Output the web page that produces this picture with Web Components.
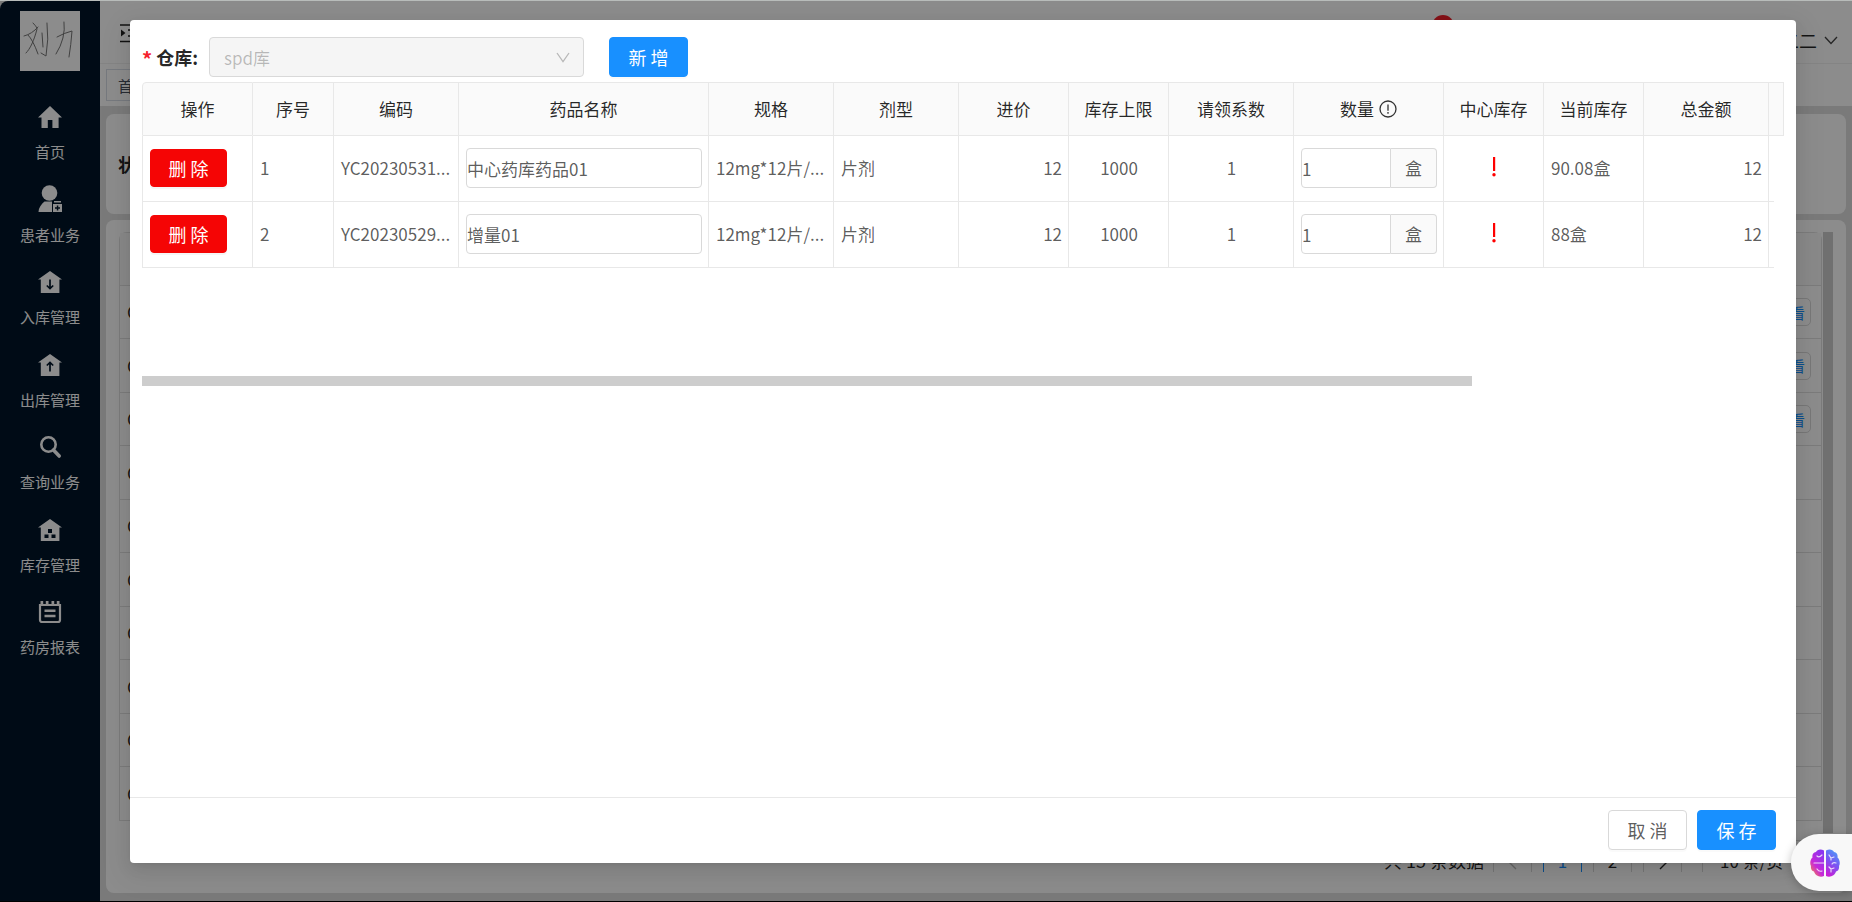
<!DOCTYPE html>
<html lang="zh-CN">
<head>
<meta charset="utf-8">
<title>药房请领</title>
<style>
html,body{margin:0;height:100%}
body{font-family:"Noto Sans CJK SC","Noto Sans",sans-serif;font-size:17px;color:rgba(0,0,0,.65);background:#dedede}
</style>
</head>
<body>
<app-shell></app-shell>
<script>
const define = (name, html, setup) => customElements.define(name, class extends HTMLElement {
  connectedCallback() {
    if (this.shadowRoot) return;
    const root = this.attachShadow({ mode: 'open' });
    const tpl = document.createElement('template');
    tpl.innerHTML = '<style>*{box-sizing:border-box}:host{box-sizing:border-box}</style>' + (typeof html === 'function' ? html(this) : html);
    root.append(tpl.content.cloneNode(true));
    if (setup) setup(this, root);
  }
});

const house = 'M12 1 0 9.5h2.8V23h18.6V9.5H24Z';
const icons = {
  home: '<path d="M12 1 0 12.5h3.5V23h6.3v-8h4.6v8h6.2V12.5H24Z"/>',
  patient: '<g transform="translate(0 -3)"><circle cx="11.5" cy="8" r="7.8"/><path d="M6.5 16.5h7.5V27H.5c0-4 2.500-7.500 6-10.500Z"/><path d="M16 16h7v1.500h-7zM15 19h9v8h-9zM18.800 20.500v1.700H17v1.500h1.800v1.800h1.500v-1.800H22v-1.500h-1.700v-1.700Z" fill-rule="evenodd"/></g>',
  inbound: `<path d="${house}"/><path d="M12 9.500v9M8.800 15.500l3.200 3 3.200-3" stroke="#001529" stroke-width="1.700" fill="none"/>`,
  outbound: `<path d="${house}"/><path d="M12 18.500v-9M8.800 12.500l3.200-3 3.200 3" stroke="#001529" stroke-width="1.700" fill="none"/>`,
  search: '<circle cx="10.500" cy="9.500" r="7.200" fill="none" stroke="#fff" stroke-width="2.600"/><path d="m15.500 15 5.700 6" stroke="#fff" stroke-width="3.600" stroke-linecap="round"/>',
  stock: `<path d="${house}"/><path d="M10 11h4v4h-4zM6.500 16.500h4v3.500h-4zM13.500 16.500h4v3.500h-4z" fill="#001529"/>`,
  report: '<path d="M2 5h20v15a2 2 0 0 1-2 2H4a2 2 0 0 1-2-2Z" fill="none" stroke="#fff" stroke-width="2.200"/><path d="M2.500 1h2.700v5H2.500zM7.800 1h2.700v5H7.800zM13.500 1h2.700v5h-2.700zM18.800 1h2.700v5h-2.700zM6.500 9.500h11v2.400h-11zM6.500 14.800h11v2.400h-11z"/>'
};

define('nav-item', el => `<style>
:host{display:block;padding-top:12px}
a{display:flex;flex-direction:column;align-items:center;gap:12px;color:#fff;text-decoration:none;font-size:15px;line-height:22px}
svg{width:24px;height:24px;overflow:visible;fill:#fff}
</style><a href="#${el.getAttribute('icon')}"><svg viewBox="0 0 24 24">${icons[el.getAttribute('icon')]}</svg><slot></slot></a>`);

define('side-nav', `<style>
:host{display:block;width:100px;flex:none;background:#001529;border-top-left-radius:8px;padding-top:10px}
.logo{display:block;width:60px;height:60px;margin:0 auto 22px;background:#fff}
nav{display:grid;grid-auto-rows:1fr;min-height:578px}
</style>
<svg class="logo" viewBox="0 0 60 60" fill="none" stroke="#777" stroke-width="1" stroke-linecap="round"><path d="M13 12q3 3 4 5M4 25q8-2 14-9M17 18C14 30 10 38 6 42M8 24q5 5 10 19M22 22l1 14M27 12q2 16-1 33l-5-3M37 26q7-4 15-6-1 14-3 26M44 11q2 16-8 32"/></svg>
<nav>
<nav-item icon="home">首页</nav-item><nav-item icon="patient">患者业务</nav-item><nav-item icon="inbound">入库管理</nav-item><nav-item icon="outbound">出库管理</nav-item><nav-item icon="search">查询业务</nav-item><nav-item icon="stock">库存管理</nav-item><nav-item icon="report">药房报表</nav-item>
</nav>`);

define('top-bar', `<style>
:host{display:block;background:#fff}
header{height:63px;display:flex;align-items:center;padding:0 14px 0 20px;border-bottom:1px solid #f0f0f0}
.fold{width:20px;height:20px;margin-top:2px}
.bell{position:relative;margin-left:auto;width:24px;height:24px;margin-right:332px}
.bell i{position:absolute;left:7px;top:-5px;width:22px;height:22px;border-radius:50%;background:#f5222d}
.user{display:flex;align-items:center;gap:7px;color:rgba(0,0,0,.85);padding-top:16px;font-size:18px}
.tabs{height:42px;padding:5px 6px}
.tabs a{display:inline-block;height:32px;padding:0 11px;border:1px solid #d8dce5;font-size:15px;line-height:32px;color:#495060;text-decoration:none}
</style>
<header><svg class="fold" viewBox="0 0 20 20" stroke="#222" stroke-width="1.600" fill="#222"><path d="M0 2h20M8 7h12M8 13h12M0 18.500h20"/><path d="m1 6.500 4.500 3.500L1 13.500Z" stroke="none"/></svg>
<span class="bell"><i></i></span>
<span class="user">二二<svg width="14" height="9" viewBox="0 0 14 9" fill="none" stroke="#444" stroke-width="1.300"><path d="m1 1 6 6.500L13 1"/></svg></span></header>
<div class="tabs"><a href="#home">首页</a></div>`);

define('record-list', `<style>
:host{display:flex;gap:1px;height:601px;padding:0 13px}
table{flex:1;width:100%;border-collapse:separate;border-spacing:0;border:1px solid #e0e0e0;border-bottom:0;border-radius:8px 8px 0 0;height:589px}
th{height:53px;background:#fafafa;border-bottom:1px solid #e0e0e0}
td{height:53px;padding:0 7px;border-bottom:1px solid #e0e0e0;line-height:24px;color:rgba(0,0,0,.85)}
tr:nth-child(even) td{height:54px}
td:last-child{text-align:right;padding-right:10px}
.bar{width:10px;background:#ccc}
button{height:28px;padding:0 5px;border:1px solid #d9d9d9;border-radius:5px;background:#fff;color:#1890ff;font:15px "Noto Sans CJK SC",sans-serif;vertical-align:middle}
</style><table><thead><tr><th></th><th></th></tr></thead><tbody></tbody></table><div class="bar"></div>`, (el, root) => {
  root.querySelector('tbody').innerHTML = Array.from({ length: 10 }, (_, i) => `<tr><td>C</td><td>${i < 3 ? '<button>查看</button>' : ''}</td></tr>`).join('');
});

define('page-pager', `<style>
:host{display:flex;justify-content:flex-end;gap:11px;height:32px;overflow:hidden;padding-right:26px;line-height:40px;margin-top:7px;color:rgba(0,0,0,.85)}
button,select{width:39px;height:40px;flex:none;border:1px solid #d9d9d9;border-radius:3px;background:#fff;font:17px "Noto Sans CJK SC",sans-serif;color:inherit;padding:0}
.on{border-color:#1890ff;color:#1890ff}
.off{color:#bbb}
select{appearance:none;width:118px;margin-left:9px;padding:0 17px}
span{margin-right:-2px;font-size:18px}
svg{vertical-align:middle}
</style><span>共 15 条数据</span>
<button class="off" aria-label="上一页"><svg width="8" height="14" viewBox="0 0 8 14" fill="none" stroke="currentColor" stroke-width="1.400"><path d="M7 1 1 7l6 6"/></svg></button><button class="on">1</button><button>2</button><button aria-label="下一页"><svg width="8" height="14" viewBox="0 0 8 14" fill="none" stroke="currentColor" stroke-width="1.400"><path d="m1 1 6 6-6 6"/></svg></button><select aria-label="每页条数"><option>10 条/页</option></select>`);

define('base-page', `<style>
:host{display:flex;min-height:100%}
main{flex:1;min-width:0;display:flex;flex-direction:column}
section{margin:0 6px 6px;background:#fff;border-radius:8px}
.filter{margin-top:8px;height:100px;padding:0 12px;display:flex;align-items:center;font-size:18px;font-weight:700;color:rgba(0,0,0,.85)}
.list{flex:1;padding-top:12px;margin-bottom:8px}
</style><side-nav></side-nav><main><top-bar></top-bar><section class="filter">状态</section><section class="list"><record-list></record-list><page-pager></page-pager></section></main>`);

define('ui-button', el => `<style>
:host{display:inline-block}
button{height:40px;min-width:79px;padding:0 18px;border:1px solid #d9d9d9;border-radius:4px;background:#fff;color:rgba(0,0,0,.65);font:18px "Noto Sans CJK SC",sans-serif;line-height:36px;box-shadow:0 2px 0 rgba(0,0,0,.02);display:block}
:host([kind=primary]) button{background:#1890ff;border-color:#1890ff;color:#fff}
:host([kind=danger]) button{background:#f50505;border-color:#f50505;color:#fff;height:38px;min-width:77px;line-height:34px;padding:0 17px;box-shadow:0 2px 0 rgba(0,0,0,.04)}
</style><button type="button"><slot></slot></button>`);

define('warehouse-field', `<style>
:host{display:flex;align-items:center}
label{display:flex;align-items:center;font-size:18px;font-weight:700;color:rgba(0,0,0,.85);width:67px;white-space:nowrap}
label i{font-style:normal;font-size:20px;line-height:24px;height:20px;color:#f5222d;margin-right:4px}
.box{position:relative;width:375px}
select{appearance:none;width:100%;height:40px;border:1px solid #d9d9d9;border-radius:4px;background:#f5f5f5;color:rgba(0,0,0,.25);opacity:1;font:17px "Noto Sans CJK SC",sans-serif;padding:0 14px}
svg{position:absolute;right:14px;top:15px}
</style><label for="w"><i>*</i>仓库:</label><span class="box"><select id="w" disabled><option>spd库</option></select><svg width="14" height="11" viewBox="0 0 14 11" fill="none" stroke="#b8b8b8" stroke-width="1.300"><path d="m1 1 6 8.500L13 1"/></svg></span>`);

define('qty-input', el => `<style>
:host{display:flex;height:40px}
input{flex:1;min-width:0;border:1px solid #d9d9d9;border-radius:4px 0 0 4px;padding:0;font:17px "Noto Sans CJK SC",sans-serif;color:rgba(0,0,0,.65)}
span{width:46px;border:1px solid #d9d9d9;border-left:0;border-radius:0 4px 4px 0;background:#fafafa;text-align:center;line-height:38px}
</style><input aria-label="数量" value="${el.getAttribute('value')}"><span><slot></slot></span>`);

const rows = [
  ['1', 'YC20230531...', '中心药库药品01', '90.08盒'],
  ['2', 'YC20230529...', '增量01', '88盒']
];
const warn = '<svg role="img" aria-label="库存不足" width="4" height="20" viewBox="0 0 4 20" fill="#f00"><path d="M1 0h2.200v14H1z"/><circle cx="2" cy="17.800" r="1.700"/></svg>';
define('drug-table', `<style>
:host{display:block;overflow:hidden;color:rgba(0,0,0,.65)}
table{table-layout:fixed;width:100%;min-width:1642px;border-collapse:separate;border-spacing:0;line-height:24px}
th{height:54px;padding:0 4px;background:#fafafa;border:solid #e8e8e8;border-width:1px 1px 1px 0;font-weight:400;color:rgba(0,0,0,.85);white-space:nowrap}
th:first-child,td:first-child{border-left-width:1px}
th:first-child{border-top-left-radius:4px}
td{height:66px;padding:0 6px 1px 7px;border:solid #e8e8e8;border-width:0 1px 1px 0;white-space:nowrap}
td:last-child{border:0;background:linear-gradient(#e8e8e8,#e8e8e8) 0 100%/5px 1px no-repeat}
.r{text-align:right}.c{text-align:center}
td ui-button{display:block}
td input{display:block;width:100%;height:40px;border:1px solid #d9d9d9;border-radius:4px;padding:0;font:17px "Noto Sans CJK SC",sans-serif;color:inherit}
svg{display:inline-block;vertical-align:middle}
td svg{display:block;margin:0 auto 2px}
th svg{margin-left:5px;margin-top:-4px}
.scroll{width:1330px;max-width:81%;height:10px;margin-top:108px;background:#cdcdcd}
</style>
<table><colgroup><col style="width:111px"><col style="width:81px"><col style="width:125px"><col style="width:250px"><col style="width:125px"><col style="width:125px"><col style="width:110px"><col style="width:100px"><col style="width:125px"><col style="width:150px"><col style="width:100px"><col style="width:100px"><col style="width:125px"><col></colgroup>
<thead><tr><th>操作</th><th>序号</th><th>编码</th><th>药品名称</th><th>规格</th><th>剂型</th><th>进价</th><th>库存上限</th><th>请领系数</th><th>数量<svg width="18" height="18" viewBox="0 0 18 18" fill="none" stroke="#333" stroke-width="1.300"><circle cx="9" cy="9" r="8"/><path d="M9 4.500v6.200M9 12v1.800"/></svg></th><th>中心库存</th><th>当前库存</th><th>总金额</th><th></th></tr></thead>
<tbody>${rows.map(([n, code, name, stock]) => `<tr><td><ui-button kind="danger">删 除</ui-button></td><td>${n}</td><td>${code}</td><td><input aria-label="药品名称" value="${name}"></td><td>12mg*12片/...</td><td>片剂</td><td class="r">12</td><td class="c">1000</td><td class="c">1</td><td><qty-input value="1">盒</qty-input></td><td class="c">${warn}</td><td>${stock}</td><td class="r">12</td><td></td></tr>`).join('')}</tbody></table><div class="scroll"></div>`);

define('modal-dialog', `<style>
:host{display:flex;flex-direction:column;background:#fff;border-radius:4px;box-shadow:0 3px 6px -4px rgba(0,0,0,.12),0 6px 16px rgba(0,0,0,.08),0 9px 28px 8px rgba(0,0,0,.05)}
.body{flex:1;padding:17px 12px}
footer{display:flex;justify-content:flex-end;gap:10px;padding:12px 20px 13px;border-top:1px solid #e8e8e8}
</style><div class="body"><slot></slot></div><footer><slot name="footer"></slot></footer>`);

define('assistant-button', `<style>
:host{display:block}
button{display:block;width:61px;height:57px;border:0;border-radius:28px 0 0 28px;background:#f8f8f8;padding:0 0 0 19px;box-shadow:0 2px 10px rgba(0,0,0,.25)}
svg{display:block}
</style><button aria-label="智能助手"><svg width="30" height="28" viewBox="0 0 30 28"><defs><linearGradient id="a" x1="0" y1="1" x2=".7" y2="0"><stop offset="0" stop-color="#ff9a1f"/><stop offset=".45" stop-color="#c829d8"/><stop offset="1" stop-color="#8b35f0"/></linearGradient><linearGradient id="b" x1=".7" y1="0" x2=".3" y2="1"><stop offset="0" stop-color="#4a9df8"/><stop offset=".5" stop-color="#7a55f2"/><stop offset="1" stop-color="#c81fd6"/></linearGradient></defs>
<path fill="url(#a)" d="M14 1.500C11-.500 7 .300 6 3 3 3.500 2 6 2.500 8.500 0 10.500-.300 15 1 17c-.500 3 1 5 3 5.500 1 4 6 6.500 10 4.500Z"/><path fill="url(#b)" d="M16 1.500C19-.500 23 .300 24 3c3 .500 4 3 3.500 5.500 2.500 2 2.800 6.500 1.500 8.500.500 3-1 5-3 5.500-1 4-6 6.500-10 4.500Z"/>
<path fill="none" stroke="#fff" stroke-opacity=".8" stroke-width="1.200" stroke-linecap="round" d="M4 14h10M7 7q2 2 5-1M7 20q2 3 5 2M19 6l2 3 3-1M21 9v2M26 14q-3-1-4 1M19 18l2 2 3-1M21 20v3"/></svg></button>`);

define('app-shell', `<style>
:host{display:block;position:relative;min-height:100vh;border-top:1px solid #b8bcba;border-bottom:1px solid #000;background:#dedede}
base-page{min-height:calc(100vh - 2px)}
.mask{position:absolute;inset:0;background:rgba(0,0,0,.45);padding:19px 56px 38px 130px;display:flex}
modal-dialog{flex:1;min-width:0}
.bar{display:flex;gap:25px;margin-bottom:5px}
assistant-button{position:absolute;right:0;bottom:10px}
</style><base-page></base-page>
<div class="mask"><modal-dialog role="dialog" aria-modal="true">
<div class="bar"><warehouse-field></warehouse-field><ui-button kind="primary">新 增</ui-button></div>
<drug-table></drug-table>
<ui-button slot="footer">取 消</ui-button><ui-button slot="footer" kind="primary">保 存</ui-button>
</modal-dialog></div><assistant-button></assistant-button>`);
</script>
</body>
</html>
